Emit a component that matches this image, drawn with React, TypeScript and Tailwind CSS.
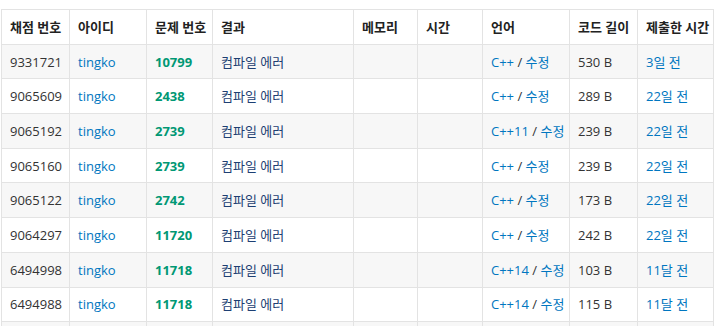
const rows = [
  { id: "9331721", user: "tingko", prob: "10799", lang: "C++", len: "530 B", time: "3일 전" },
  { id: "9065609", user: "tingko", prob: "2438", lang: "C++", len: "289 B", time: "22일 전" },
  { id: "9065192", user: "tingko", prob: "2739", lang: "C++11", len: "239 B", time: "22일 전" },
  { id: "9065160", user: "tingko", prob: "2739", lang: "C++", len: "239 B", time: "22일 전" },
  { id: "9065122", user: "tingko", prob: "2742", lang: "C++", len: "173 B", time: "22일 전" },
  { id: "9064297", user: "tingko", prob: "11720", lang: "C++", len: "242 B", time: "22일 전" },
  { id: "6494998", user: "tingko", prob: "11718", lang: "C++14", len: "103 B", time: "11달 전" },
  { id: "6494988", user: "tingko", prob: "11718", lang: "C++14", len: "115 B", time: "11달 전" },
  { id: "6494950", user: "tingko", prob: "11718", lang: "C++14", len: "115 B", time: "11달 전" },
];

const headers = ["채점 번호", "아이디", "문제 번호", "결과", "메모리", "시간", "언어", "코드 길이", "제출한 시간"];
const widths = ["w-[68px]", "w-[77px]", "w-[66px]", "w-[141px]", "w-[64px]", "w-[65px]", "w-[87px]", "w-[68px]", "w-[76px]"];

const cell = "border border-[#e3e3e3] px-2 h-[34.7px] align-middle whitespace-nowrap";

export default function App() {
  return (
    <div
      className="bg-white h-[326px] overflow-hidden pt-[9px] pl-[1px] text-[13px] text-[#333]"
      style={{ fontFamily: '"Open Sans", "Noto Sans CJK KR", sans-serif' }}
    >
      <table className="table-fixed border-collapse w-[713px] leading-[18px]">
        <colgroup>
          {widths.map((w, i) => (
            <col key={i} className={w} />
          ))}
        </colgroup>
        <thead>
          <tr className="bg-white">
            {headers.map((h) => (
              <th key={h} className={`${cell} text-left font-bold text-[#222]`}>
                {h}
              </th>
            ))}
          </tr>
        </thead>
        <tbody>
          {rows.map((r, i) => (
            <tr key={r.id} className={i % 2 === 0 ? "bg-[#f7f7f7]" : "bg-white"}>
              <td className={cell}>{r.id}</td>
              <td className={`${cell} text-[#0076c0]`}>{r.user}</td>
              <td className={`${cell} font-bold text-[#009874]`}>{r.prob}</td>
              <td className={`${cell} text-[#1d3f73]`}>컴파일 에러</td>
              <td className={cell}></td>
              <td className={cell}></td>
              <td className={`${cell} text-[#0076c0]`}>
                {r.lang} <span className="text-[#333]">/</span> 수정
              </td>
              <td className={cell}>{r.len}</td>
              <td className={`${cell} text-[#0076c0]`}>{r.time}</td>
            </tr>
          ))}
        </tbody>
      </table>
    </div>
  );
}
